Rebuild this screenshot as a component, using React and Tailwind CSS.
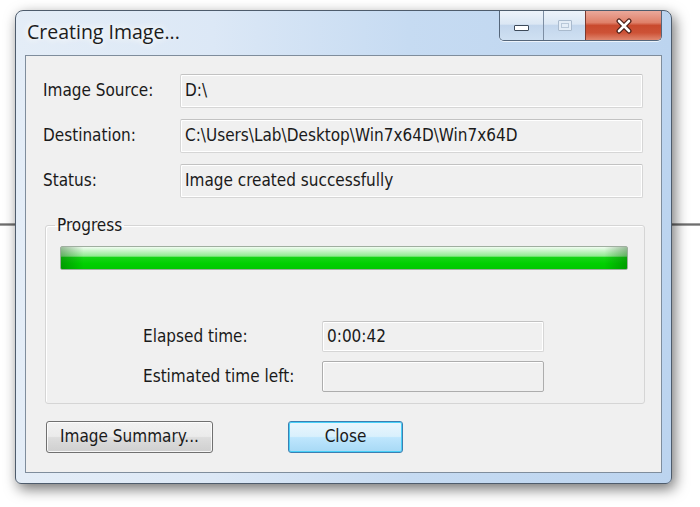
import React from "react";

const body = { fontFamily: '"DejaVu Sans Condensed", "Liberation Sans", sans-serif' };

function Field({ children, className = "" }) {
  return (
    <div
      className={
        "flex items-center rounded-[2px] border border-[#d6d6d6] border-t-[#c2c2c2] bg-[#f0f0f0] pl-[4px] text-[17px] text-[#1a1a1a] shadow-[inset_1px_1px_0_#ffffff,inset_-1px_-1px_0_#ffffff] " +
        className
      }
    >
      {children}
    </div>
  );
}

function Row({ label, value }) {
  return (
    <div className="flex h-[34px] items-center">
      <div className="w-[137px] text-[17px] text-[#1a1a1a]">{label}</div>
      <Field className="h-[34px] w-[463px]">{value}</Field>
    </div>
  );
}

export default function App() {
  return (
    <div className="relative h-[507px] w-[700px] overflow-hidden bg-white" style={body}>
      {/* desktop line behind the window */}
      <div className="absolute left-0 right-0 top-[223px] h-[3px] bg-[linear-gradient(180deg,#b8b8b8,#6e6e6e,#b8b8b8)]" />

      <div className="relative ml-[15px] mt-[10px] flex h-[474px] w-[657px] flex-col rounded-t-[8px] rounded-b-[6px] border border-[#4e5c6c] bg-[linear-gradient(90deg,#e4edf7_0%,#dce8f6_30%,#c6dbf2_60%,#bcd4ef_100%)] px-[9px] pb-[10px] shadow-[3px_5px_14px_rgba(0,0,0,0.55)]">
        {/* title bar */}
        <div className="flex h-[44px] items-start justify-between">
          <div
            className="ml-[2px] mt-[9px] text-[19.5px] leading-[24px] text-[#1c1c1c]"
            style={{ fontFamily: '"Open Sans", "Noto Sans", sans-serif', textShadow: "0 0 10px #ffffff, 0 0 6px #ffffff" }}
          >
            Creating Image...
          </div>
          <div className="flex h-[30px] overflow-hidden rounded-b-[5px] border border-t-0 border-[#55667a] shadow-[0_1px_0_rgba(255,255,255,0.7)]">
            <div className="flex w-[44px] items-start justify-center border-r border-[#7d8ea3] bg-[linear-gradient(180deg,#edf3fa_0%,#dbe7f4_45%,#c3d6ec_50%,#cfe0f2_100%)] pt-[14px]">
              <div className="h-[6px] w-[15px] rounded-[1px] border border-[#3d4a5a] bg-white" />
            </div>
            <div className="flex w-[42px] items-start justify-center border-r border-[#7a3a30] bg-[linear-gradient(180deg,#edf3fa_0%,#dbe7f4_45%,#c3d6ec_50%,#cfe0f2_100%)] pt-[9px]">
              <div className="h-[11px] w-[14px] rounded-[1px] border border-[#a9bacd] bg-[#e4edf7] p-[2px]">
                <div className="h-full w-full border border-[#b9c8d9]" />
              </div>
            </div>
            <div className="flex w-[75px] items-start justify-center bg-[linear-gradient(180deg,#eaa99b_0%,#df8069_40%,#c94a2e_50%,#cd5236_75%,#e0876f_100%)] pt-[7px]">
              <svg width="18" height="16" viewBox="0 0 18 16">
                <path d="M4 3 L14 13 M14 3 L4 13" stroke="#4a1f18" strokeWidth="5" strokeLinecap="round" />
                <path d="M4 3 L14 13 M14 3 L4 13" stroke="#ffffff" strokeWidth="2.6" strokeLinecap="round" />
              </svg>
            </div>
          </div>
        </div>

        {/* client area */}
        <div className="flex flex-1 flex-col border border-[#7f8d9c] bg-[#f0f0f0] pl-[17px] pr-[18px] pt-[18px]">
          <div className="flex flex-col gap-[11px]">
            <Row label="Image Source:" value="D:\" />
            <Row label="Destination:" value="C:\Users\Lab\Desktop\Win7x64D\Win7x64D" />
            <Row label="Status:" value="Image created successfully" />
          </div>

          <fieldset className="ml-[2px] mr-[-2px] mt-[17px] rounded-[3px] border border-[#d5d5d5] pb-[11px] shadow-[inset_1px_1px_0_#ffffff]">
            <legend className="ml-[9px] px-[2px] text-[17px] leading-[20px] text-[#1a1a1a]">Progress</legend>
            <div className="ml-[14px] mr-[16px] mt-[11px] h-[24px] overflow-hidden rounded-[2px] border border-[#9fae9f] bg-[linear-gradient(180deg,#f0fcf0_0%,#c2f3c2_20%,#8fea8f_42%,#16d416_46%,#00d000_75%,#00c800_100%)]">
              <div className="h-full w-full bg-[linear-gradient(90deg,rgba(0,70,0,0.35)_0%,rgba(0,70,0,0)_4%,rgba(0,70,0,0)_96%,rgba(0,70,0,0.35)_100%)]" />
            </div>

            <div className="ml-[97px] mt-[51px] flex flex-col gap-[9px]">
              <div className="flex h-[31px] items-center">
                <div className="w-[179px] text-[17px] text-[#1a1a1a]">Elapsed time:</div>
                <Field className="h-[31px] w-[222px]">0:00:42</Field>
              </div>
              <div className="flex h-[31px] items-center">
                <div className="w-[179px] text-[17px] text-[#1a1a1a]">Estimated time left:</div>
                <div className="h-[31px] w-[222px] rounded-[2px] border border-[#adadad] bg-[#f0f0f0] shadow-[inset_1px_1px_0_#ffffff]" />
              </div>
            </div>
          </fieldset>

          <div className="ml-[3px] mt-[17px] flex gap-[75px]">
            <div className="flex h-[32px] w-[167px] items-center justify-center rounded-[3px] border border-[#707070] bg-[linear-gradient(180deg,#f2f2f2_0%,#ebebeb_48%,#dddddd_52%,#cfcfcf_100%)] text-[17px] text-[#1a1a1a] shadow-[inset_0_0_0_1px_rgba(255,255,255,0.8)]">
              Image Summary...
            </div>
            <div className="flex h-[32px] w-[115px] items-center justify-center rounded-[3px] border border-[#3c7fb1] bg-[linear-gradient(180deg,#eaf6fd_0%,#d9f0fc_48%,#bee6fd_52%,#a7d9f5_100%)] text-[17px] text-[#1a1a1a] shadow-[inset_0_0_0_1px_#48d0f8]">
              Close
            </div>
          </div>
        </div>
      </div>
    </div>
  );
}
